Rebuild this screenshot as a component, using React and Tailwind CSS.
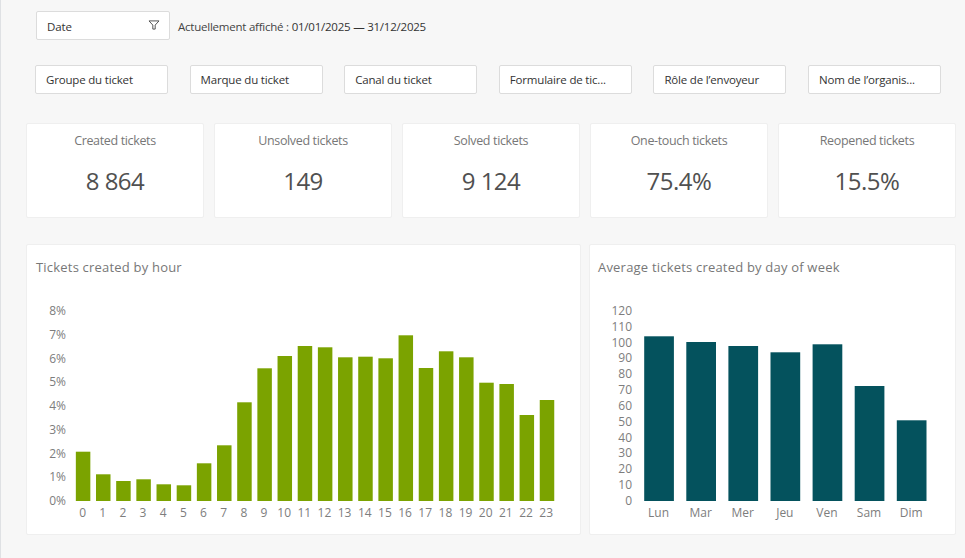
import React from "react";

const filters = [
  "Groupe du ticket",
  "Marque du ticket",
  "Canal du ticket",
  "Formulaire de tic...",
  "Rôle de l’envoyeur",
  "Nom de l’organis...",
];

const kpis = [
  { label: "Created tickets", value: "8 864" },
  { label: "Unsolved tickets", value: "149" },
  { label: "Solved tickets", value: "9 124" },
  { label: "One-touch tickets", value: "75.4%" },
  { label: "Reopened tickets", value: "15.5%" },
];

// bar heights in px, measured from the baseline
const hourly = [49.3, 26.7, 20, 21.7, 16.7, 15.7, 37.7, 55.7, 98.7, 132.7, 145, 155, 153.7, 143.7, 144.3, 142.7, 165.7, 133, 149.7, 143.7, 118.3, 117, 86, 101];
const daily = [164.7, 159, 155, 148.7, 156.7, 115, 80.7];

const hourLabels = hourly.map((_, i) => String(i));
const dayLabels = ["Lun", "Mar", "Mer", "Jeu", "Ven", "Sam", "Dim"];
const percentTicks = ["8%", "7%", "6%", "5%", "4%", "3%", "2%", "1%", "0%"];
const countTicks = ["120", "110", "100", "90", "80", "70", "60", "50", "40", "30", "20", "10", "0"];

const Bars = ({ data, pitch, barWidth, color }) => (
  <svg width={data.length * pitch} height="199" className="block">
    {data.map((h, i) => (
      <rect key={i} x={i * pitch + (pitch - barWidth) / 2} y={199 - h} width={barWidth} height={h} fill={color} />
    ))}
  </svg>
);

const Chart = ({ title, ticks, labels, data, pitch, barWidth, color, className, axisClass, titleClass }) => (
  <div className={`bg-white border border-[#efefef] rounded-[2px] h-[291px] pt-[12px] ${className}`}>
    <h2 className={`text-[13px] leading-5 tracking-[0.2px] font-normal text-[#777] ${titleClass}`}>{title}</h2>
    <div className="flex mt-[25px]">
      <div className={`flex flex-col justify-between h-[204px] mt-[2px] text-right text-[12px] leading-[14px] text-[#7d7d7d] ${axisClass}`}>
        {ticks.map((t) => (
          <span key={t}>{t}</span>
        ))}
      </div>
      <div className="pt-[0.3px]">
        <Bars data={data} pitch={pitch} barWidth={barWidth} color={color} />
        <div className="flex mt-[4px] text-[12px] leading-4 text-[#7d7d7d]">
          {labels.map((l) => (
            <span key={l} className="text-center" style={{ width: pitch }}>
              {l}
            </span>
          ))}
        </div>
      </div>
    </div>
  </div>
);

const App = () => {
  return (
    <div className="w-[965px] h-[558px] overflow-hidden bg-[#f7f7f7] border-l border-[#dfe1e4] font-['Open_Sans',sans-serif]">
      {/* date filter */}
      <div className="flex items-center pt-[11px] pl-[35px]">
        <div className="flex items-center justify-between w-[134px] h-[29px] bg-white border border-[#dcdcdc] rounded-[2px] pl-[10px] pr-[9px]">
          <span className="pt-[2px] text-[11.5px] tracking-[-0.1px] text-[#333]">Date</span>
          <svg width="12" height="10" viewBox="0 0 13 11" className="mb-[2px]" fill="none" stroke="#444" strokeWidth="1">
            <path d="M1 1h11L7.8 5.6V10H5.2V5.6z" />
          </svg>
        </div>
        <p className="ml-[8px] pt-[2px] text-[11.5px] tracking-[-0.23px] text-[#444]">
          Actuellement affiché : <span className="font-medium text-[#333]">01/01/2025 — 31/12/2025</span>
        </p>
      </div>

      {/* ticket filters */}
      <div className="grid grid-cols-6 gap-x-[21.6px] w-[906px] ml-[34px] mt-[25px]">
        {filters.map((f) => (
          <div key={f} className="flex items-center h-[29px] bg-white border border-[#dcdcdc] rounded-[2px] pl-[10px] pt-[1px] text-[11.5px] tracking-[-0.18px] whitespace-nowrap text-[#333]">
            {f}
          </div>
        ))}
      </div>

      {/* KPI cards */}
      <div className="grid grid-cols-5 gap-x-[10px] w-[930px] ml-[25px] mt-[29px]">
        {kpis.map((k) => (
          <div key={k.label} className="h-[95px] bg-white border border-[#efefef] rounded-[2px] text-center pt-[7px]">
            <div className="text-[12.5px] leading-5 tracking-[-0.35px] text-[#777]">{k.label}</div>
            <div className="mt-[14px] text-[24px] leading-8 tracking-[-0.5px] text-[#505050]">{k.value}</div>
          </div>
        ))}
      </div>

      {/* charts */}
      <div className="flex gap-x-[8px] ml-[25px] mt-[26px]">
        <Chart
          title="Tickets created by hour"
          ticks={percentTicks}
          labels={hourLabels}
          data={hourly}
          pitch={20.17}
          barWidth={14.5}
          color="#7ba300"
          className="w-[555px]"
          axisClass="w-[39px] mr-[6.5px]"
          titleClass="pl-[9px]"
        />
        <Chart
          title="Average tickets created by day of week"
          ticks={countTicks}
          labels={dayLabels}
          data={daily}
          pitch={42.1}
          barWidth={29.7}
          color="#04525d"
          className="w-[367px]"
          axisClass="w-[42px] mr-[5.5px]"
          titleClass="pl-[8px]"
        />
      </div>
    </div>
  );
};

export default App;
